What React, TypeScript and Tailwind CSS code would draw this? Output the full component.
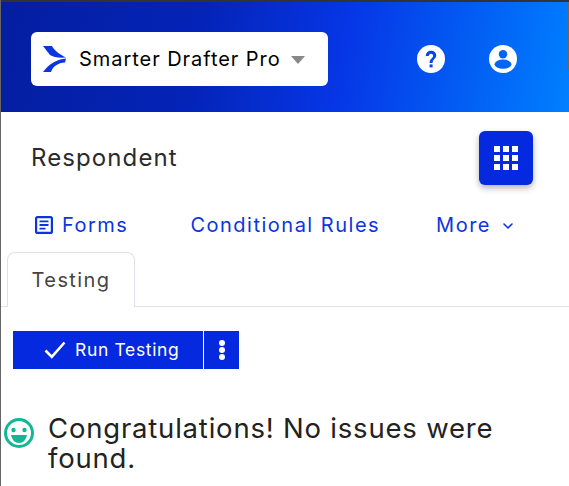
import { ChevronDown } from 'lucide-react';

function Logo() {
  return (
    <svg width="24" height="26" viewBox="0 0 24 26">
      <path d="M0 0H9C11 4 16 8 23 11.5C15 12 10 11 7 9Z" fill="#0a35e0" />
      <path d="M23 12.5C14 13 6 18 0 26H8C10 20 15 17 22 16.5Z" fill="#0a35e0" />
    </svg>
  );
}

function HelpIcon() {
  return (
    <svg width="28" height="28" viewBox="0 0 28 28">
      <circle cx="14" cy="14" r="14" fill="#fff" />
      <path d="M8.8 11C8.8 7.8 11 5.8 14 5.8C17.1 5.8 19.2 7.8 19.2 10.6C19.2 13.9 15.6 14.3 15.6 18H12.6C12.6 13.6 16.1 13.4 16.1 10.8C16.1 9.6 15.2 8.7 14 8.7C12.7 8.7 11.9 9.7 11.8 11Z" fill="#0a45ea" />
      <rect x="12.6" y="19.4" width="3" height="3" fill="#0a45ea" />
    </svg>
  );
}

function UserIcon() {
  return (
    <svg width="28" height="28" viewBox="0 0 28 28">
      <circle cx="14" cy="14" r="14" fill="#fff" />
      <circle cx="14" cy="9.2" r="4.2" fill="#0065f5" />
      <ellipse cx="14" cy="19.2" rx="8.4" ry="4.6" fill="#0065f5" />
    </svg>
  );
}

function FormsIcon() {
  return (
    <svg width="18" height="18" viewBox="0 0 18 18" fill="none">
      <rect x="1.1" y="1.1" width="15.8" height="15.8" rx="1.5" stroke="#0a35e0" strokeWidth="2.2" />
      <path d="M4.5 5.4H13.5M4.5 9H13.5M4.5 12.6H10.5" stroke="#0a35e0" strokeWidth="1.8" />
    </svg>
  );
}

function CheckMark() {
  return (
    <svg width="22" height="18" viewBox="0 0 22 18" fill="none">
      <path d="M1.5 9.5L7.8 15.8L20.5 1.5" stroke="#fff" strokeWidth="2.6" />
    </svg>
  );
}

function Dots() {
  return (
    <svg width="8" height="22" viewBox="0 0 8 22">
      <circle cx="4" cy="4" r="3" fill="#fff" />
      <circle cx="4" cy="11" r="3" fill="#fff" />
      <circle cx="4" cy="18" r="3" fill="#fff" />
    </svg>
  );
}

function SmileIcon() {
  return (
    <svg width="30" height="30" viewBox="0 0 30 30">
      <circle cx="15" cy="15" r="13.5" fill="none" stroke="#14b795" strokeWidth="3" />
      <circle cx="9.5" cy="12" r="2.2" fill="#14b795" />
      <circle cx="20.5" cy="12" r="2.2" fill="#14b795" />
      <path d="M7 17H23C22 22 19 25 15 25C11 25 8 22 7 17Z" fill="#14b795" />
    </svg>
  );
}

export default function App() {
  return (
    <div className="w-[569px] h-[486px] overflow-hidden bg-white border-l border-[#666] font-['Inter',sans-serif] text-[#222]">
      <header className="relative h-[112px] border-t-2 border-[#333] bg-[linear-gradient(100deg,#041ea0_0%,#0424b8_35%,#0636e6_60%,#0080ff_100%)] flex items-center pt-[4px] pl-[30px] pr-[52px] justify-between">
        <span className="absolute right-0 top-0 w-px h-[68px] bg-[#666]" />
        <button className="w-[297px] h-[54px] bg-white rounded-md flex items-center pl-[12px] text-black">
          <Logo />
          <span className="ml-[12px] text-[20px] tracking-[0.95px]">Smarter Drafter Pro</span>
          <span className="ml-[10px] mt-[1px] w-0 h-0 border-x-[7.5px] border-x-transparent border-t-[8px] border-t-[#888]" />
        </button>
        <div className="flex items-center gap-[44px]">
          <HelpIcon />
          <UserIcon />
        </div>
      </header>
      <div className="flex items-center justify-between pl-[30px] pr-[36px] pt-[19px]">
        <h1 className="text-[24px] tracking-[1.1px] font-normal text-[#2b2b2b]">Respondent</h1>
        <div className="w-[54px] h-[54px] rounded-md bg-[#0529de] shadow-[0_3px_6px_rgba(0,0,0,0.3)] grid grid-cols-[6px_6px_6px] gap-[3px] content-center justify-center">
          {Array.from({ length: 9 }).map((_, i) => (
            <span key={i} className="w-[6px] h-[6px] bg-white" />
          ))}
        </div>
      </div>
      <nav className="flex items-center text-[#0a35e0] text-[20px] tracking-[1.5px] mt-[15px] h-[50px] pl-[34px]">
        <FormsIcon />
        <span className="ml-[9px]">Forms</span>
        <span className="ml-[62px]">Conditional Rules</span>
        <span className="ml-[56px]">More</span>
        <ChevronDown className="ml-[9px] mt-[2px]" size={16} strokeWidth={2.4} />
      </nav>
      <div className="border-b border-[#dfe1e6] h-[55px] pl-[6px] mt-[2px]">
        <div className="w-[128px] h-[55px] border border-b-0 border-[#dfe1e6] rounded-t-lg bg-white flex items-center justify-center text-[20px] tracking-[1.4px] text-[#444]">
          Testing
        </div>
      </div>
      <div className="flex mt-[24px] pl-[12px] text-white">
        <button className="w-[190px] h-[38px] bg-[#0529de] flex items-center pl-[31px] gap-[9px] text-[17.5px] tracking-[0.65px]">
          <CheckMark />
          Run Testing
        </button>
        <button className="w-[35px] h-[38px] ml-[1px] bg-[#0529de] flex items-center justify-center">
          <Dots />
        </button>
      </div>
      <div className="flex mt-[44px] pl-[3px]">
        <div className="mt-[5px]">
          <SmileIcon />
        </div>
        <p className="ml-[14px] w-[500px] text-[27.5px] leading-[30px] tracking-[0.8px] text-[#222]">
          Congratulations! No issues were found.
        </p>
      </div>
    </div>
  );
}
